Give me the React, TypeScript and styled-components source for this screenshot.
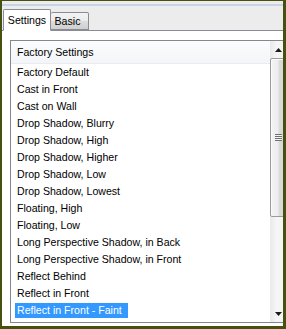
import React from 'react'
import styled, {createGlobalStyle} from 'styled-components'

const GlobalStyle = createGlobalStyle`
    html, body {
      margin: 0;
      padding: 0;
      background: #fff;
    }
    body {
      font-family: "Liberation Sans", Arial, sans-serif;
      font-size: 10.6px;
      color: #000;
    }
`

const Frame = styled.div`
    width: 286px;
    height: 329px;
    box-sizing: border-box;
    border-style: solid;
    border-color: #46500f;
    border-width: 1px 3px 3px 2px;
    display: flex;
    flex-direction: column;
    overflow: hidden;
    background: #fff;
`

const TopRule = styled.div`
    height: 3px;
    flex: none;
    background: #ececec;
    border-bottom: 2px solid #c6d5e6;
`

const TabStrip = styled.div`
    height: 24px;
    flex: none;
    display: flex;
    align-items: flex-end;
    padding-left: 1px;
    background: #ececec;
    border-bottom: 1px solid #898c95;
`

const Tab = styled.div<{$active?: boolean}>`
    box-sizing: border-box;
    display: flex;
    align-items: center;
    justify-content: center;
    border: 1px solid #898c95;
    border-radius: 2px 2px 0 0;
    height: ${p => (p.$active ? '22px' : '18px')};
    width: ${p => (p.$active ? '48px' : '38px')};
    padding-right: ${p => (p.$active ? '0' : '4px')};
    margin-bottom: ${p => (p.$active ? '-1px' : '0')};
    border-bottom-color: ${p => (p.$active ? '#fff' : '#898c95')};
    border-left-width: ${p => (p.$active ? '1px' : '0')};
    background: ${p => (p.$active ? '#fff' : 'linear-gradient(#f3f3f3, #ebebeb 50%, #dddddd 51%, #cfcfcf)')};
`

const Panel = styled.div`
    flex: 1;
    min-height: 0;
    padding: 9px 0 3px 8px;
    background: #fff;
    display: flex;
`

const ListBox = styled.div`
    flex: none;
    width: 278px;
    box-sizing: border-box;
    border: 1px solid #828790;
    display: flex;
    background: #fff;
`

const ListContent = styled.div`
    flex: 1;
    display: flex;
    flex-direction: column;
`

const Header = styled.div`
    height: 22px;
    line-height: 22px;
    padding-left: 6px;
    border-bottom: 1px solid #e8ebef;
    background: linear-gradient(#fbfcfd, #f3f5f8);
`

const Row = styled.div`
    height: 17px;
    display: flex;
    align-items: center;
    padding-left: 4px;
    white-space: nowrap;
`

const Label = styled.span<{$selected?: boolean}>`
    display: inline-block;
    height: 15px;
    line-height: 15px;
    padding: 0 6px 0 2px;
    background: ${p => (p.$selected ? '#3399ff' : 'transparent')};
    color: ${p => (p.$selected ? '#fff' : '#000')};
`

const ScrollBar = styled.div`
    width: 17px;
    flex: none;
    display: flex;
    flex-direction: column;
    background: linear-gradient(to right, #e9e9e9, #f6f6f6 40%, #f2f2f2);
`

const ArrowButton = styled.div`
    height: 17px;
    flex: none;
    display: flex;
    align-items: center;
    justify-content: center;
    padding-right: 1px;
`

const Track = styled.div`
    flex: 1;
    display: flex;
    flex-direction: column;
`

const Thumb = styled.div`
    height: 159px;
    box-sizing: border-box;
    border: 1px solid #9a9a9a;
    border-radius: 2px;
    background: linear-gradient(to right, #f4f4f4, #ededed 45%, #dcdcdc 55%, #d2d2d2);
    box-shadow: inset 1px 1px 0 #fbfbfb;
    display: flex;
    align-items: center;
    justify-content: center;
`

const Grip = styled.div`
    width: 7px;
    height: 7px;
    background: repeating-linear-gradient(#6f6f6f 0 1px, #f4f4f4 1px 2px);
`

const items = [
    'Factory Default',
    'Cast in Front',
    'Cast on Wall',
    'Drop Shadow, Blurry',
    'Drop Shadow, High',
    'Drop Shadow, Higher',
    'Drop Shadow, Low',
    'Drop Shadow, Lowest',
    'Floating, High',
    'Floating, Low',
    'Long Perspective Shadow, in Back',
    'Long Perspective Shadow, in Front',
    'Reflect Behind',
    'Reflect in Front',
    'Reflect in Front - Faint',
]

const Arrow = ({down}: {down?: boolean}) => (
    <svg width='7' height='4' viewBox='0 0 7 4'>
        <path d={down ? 'M0 0H7L3.5 4Z' : 'M3.5 0L7 4H0Z'} fill='#1a1a1a'/>
    </svg>
)

const App: React.FC = () => {
    const selected = 'Reflect in Front - Faint'

    return (
        <>
            <GlobalStyle/>
            <Frame>
                <TopRule/>
                <TabStrip>
                    <Tab $active>Settings</Tab>
                    <Tab>Basic</Tab>
                </TabStrip>
                <Panel>
                    <ListBox>
                        <ListContent>
                            <Header>Factory Settings</Header>
                            {items.map(item => (
                                <Row key={item}>
                                    <Label $selected={item === selected}>{item}</Label>
                                </Row>
                            ))}
                        </ListContent>
                        <ScrollBar>
                            <ArrowButton><Arrow/></ArrowButton>
                            <Track>
                                <Thumb><Grip/></Thumb>
                            </Track>
                            <ArrowButton><Arrow down/></ArrowButton>
                        </ScrollBar>
                    </ListBox>
                </Panel>
            </Frame>
        </>
    )
}

export default App
